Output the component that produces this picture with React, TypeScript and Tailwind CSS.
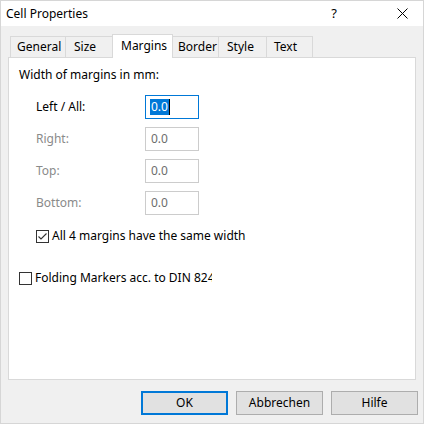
import React from "react"

interface Tab {
  label: string
  width: string
  pad: string
  active?: boolean
}

const tabs: Tab[] = [
  { label: "General", width: "w-[56px]", pad: "pl-[6px]" },
  { label: "Size", width: "w-[48px]", pad: "pl-[8px]" },
  { label: "Margins", width: "w-[61px]", pad: "pl-[8px]", active: true },
  { label: "Border", width: "w-[47px]", pad: "pl-[5px]" },
  { label: "Style", width: "w-[49px]", pad: "pl-[8px]" },
  { label: "Text", width: "w-[47px]", pad: "pl-[7px]" },
]

const marginRows = [
  { label: "Left / All:", enabled: true },
  { label: "Right:", enabled: false },
  { label: "Top:", enabled: false },
  { label: "Bottom:", enabled: false },
]

function CheckBox({ checked }: { checked: boolean }) {
  return (
    <span className="w-[13px] h-[13px] border border-[#333333] bg-white flex items-center justify-center shrink-0">
      {checked && (
        <svg width="11" height="11" viewBox="0 0 11 11">
          <path d="M1.5 5.5 L4 8 L9.5 2.5" fill="none" stroke="#333333" strokeWidth="1.1" />
        </svg>
      )}
    </span>
  )
}

export default function App() {
  return (
    <div className="min-h-screen bg-white">
      <div
        className="w-[424px] h-[424px] border border-[#d6d6d6] bg-[#f0f0f0] flex flex-col text-[12px] text-black"
        style={{ fontFamily: '"Noto Sans", "Open Sans", sans-serif' }}
      >
        {/* title bar */}
        <div className="h-[25px] bg-white flex items-center pl-[5px] relative">
          <span>Cell Properties</span>
          <span className="ml-auto mr-[60px] text-[13px]">?</span>
          <svg className="mr-[15px]" width="11" height="11" viewBox="0 0 11 11">
            <path d="M0.5 0.5 L10.5 10.5 M10.5 0.5 L0.5 10.5" stroke="#000" strokeWidth="1" />
          </svg>
        </div>

        <div className="flex-1 px-[7px] pt-[8px] flex flex-col">
          {/* tab strip */}
          <div className="flex items-end h-[23px] pl-[2px]">
            {tabs.map((t, i) => (
              <div
                key={t.label}
                className={`${t.width} ${t.pad} ${i > 0 ? "-ml-px" : ""} border border-b-0 border-[#d9d9d9] flex items-center whitespace-nowrap overflow-hidden ${
                  t.active ? "h-[24px] -mb-px bg-white relative z-10 pb-[2px]" : "h-[21px] bg-[#f0f0f0]"
                }`}
              >
                {t.label}
              </div>
            ))}
          </div>

          {/* margins page */}
          <div className="w-[408px] h-[323px] border border-[#d9d9d9] bg-white pl-[10px] pt-[9px]">
            <div className="leading-[16px]">Width of margins in mm:</div>

            <div className="flex flex-col gap-[8px] mt-[12px] pl-[17px]">
              {marginRows.map((r) => (
                <div key={r.label} className="flex items-center h-[24px]">
                  <span className={`w-[109px] ${r.enabled ? "text-black" : "text-[#8a8a8a]"}`}>{r.label}</span>
                  <div
                    className={`w-[54px] h-[24px] border bg-white flex items-center pl-[4px] ${
                      r.enabled ? "border-[#0078d7]" : "border-[#cccccc] text-[#6d6d6d]"
                    }`}
                  >
                    {r.enabled ? (
                      <>
                        <span className="bg-[#0078d7] text-white leading-[16px] px-px">0.0</span>
                        <span className="w-px h-[16px] bg-black" />
                      </>
                    ) : (
                      <span className="px-px">0.0</span>
                    )}
                  </div>
                </div>
              ))}
            </div>

            <label className="flex items-center gap-[3px] h-[16px] mt-[13px] pl-[17px]">
              <CheckBox checked />
              <span>All 4 margins have the same width</span>
            </label>

            <label className="flex items-center gap-[3px] h-[16px] mt-[26px]">
              <CheckBox checked={false} />
              <span className="w-[177px] overflow-hidden whitespace-nowrap">Folding Markers acc. to DIN 824</span>
            </label>
          </div>

          {/* dialog buttons */}
          <div className="flex justify-end gap-[8px] mt-[11px] -mr-[2px]">
            <button className="w-[87px] h-[24px] bg-[#e1e1e1] border-2 border-[#0078d7]">OK</button>
            <button className="w-[87px] h-[24px] bg-[#e1e1e1] border border-[#adadad]">Abbrechen</button>
            <button className="w-[87px] h-[24px] bg-[#e1e1e1] border border-[#adadad]">Hilfe</button>
          </div>
        </div>
      </div>
    </div>
  )
}
